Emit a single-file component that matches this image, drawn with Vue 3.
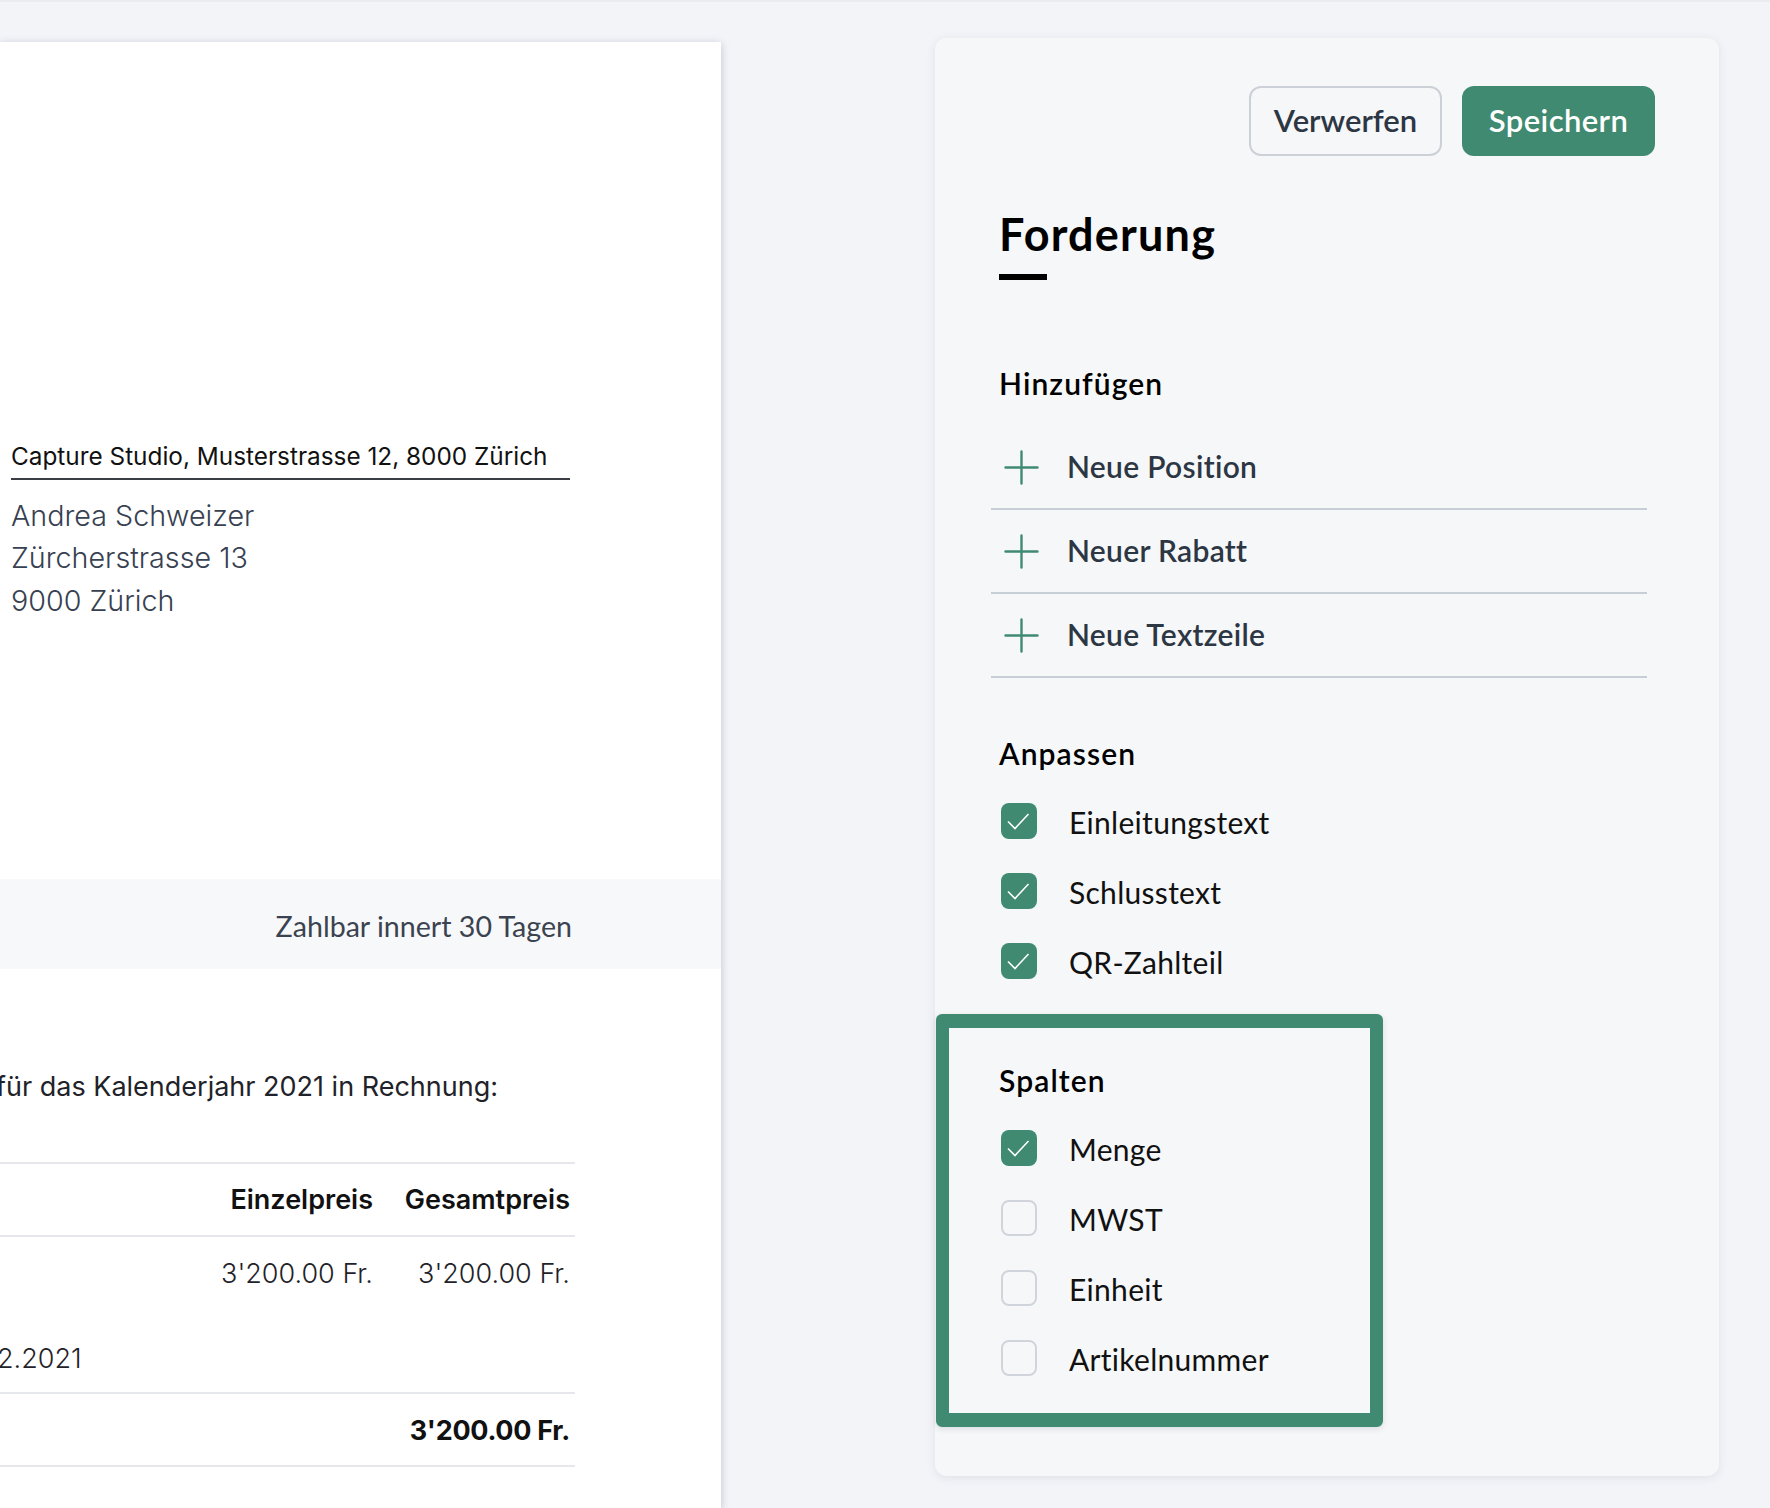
<script setup>
const addItems = ['Neue Position', 'Neuer Rabatt', 'Neue Textzeile']
const adjustItems = [
  { label: 'Einleitungstext', checked: true },
  { label: 'Schlusstext', checked: true },
  { label: 'QR-Zahlteil', checked: true },
]
const columnItems = [
  { label: 'Menge', checked: true },
  { label: 'MWST', checked: false },
  { label: 'Einheit', checked: false },
  { label: 'Artikelnummer', checked: false },
]
</script>

<template>
  <div class="page">
    <!-- Rechnung (links angeschnitten) -->
    <main class="doc">
      <div class="sender">Capture Studio, Musterstrasse 12, 8000 Zürich</div>
      <div class="address">
        <div>Andrea Schweizer</div>
        <div>Zürcherstrasse 13</div>
        <div>9000 Zürich</div>
      </div>
      <div class="terms">Zahlbar innert 30 Tagen</div>
      <p class="intro">für das Kalenderjahr 2021 in Rechnung:</p>
      <div class="table">
        <div class="row head">
          <span></span>
          <span class="num">Einzelpreis</span>
          <span class="num">Gesamtpreis</span>
        </div>
        <div class="row item">
          <span></span>
          <span class="num">3'200.00 Fr.</span>
          <span class="num">3'200.00 Fr.</span>
          <span class="period">2.2021</span>
        </div>
        <div class="row total">
          <span></span>
          <span></span>
          <span class="num">3'200.00 Fr.</span>
        </div>
      </div>
    </main>

    <!-- Seitenleiste -->
    <aside class="panel">
      <div class="actions">
        <button class="btn btn-ghost">Verwerfen</button>
        <button class="btn btn-primary">Speichern</button>
      </div>

      <h1 class="title">Forderung</h1>
      <div class="title-bar"></div>

      <h2 class="section-title add-title">Hinzufügen</h2>
      <ul class="add-list">
        <li v-for="item in addItems" :key="item" class="add-row">
          <svg class="plus" viewBox="0 0 35 35" fill="none" stroke="#3f8a70" stroke-width="2.4" stroke-linecap="round">
            <path d="M17.5 1.5v32M1.5 17.5h32" />
          </svg>
          <span class="add-label">{{ item }}</span>
        </li>
      </ul>

      <h2 class="section-title adjust-title">Anpassen</h2>
      <div class="checks">
        <label v-for="item in adjustItems" :key="item.label" class="check-row">
          <span class="box" :class="{ on: item.checked }">
            <svg v-if="item.checked" viewBox="0 0 36 36" fill="none" stroke="#fff" stroke-width="1.6">
              <path d="M7 18.5l7 7L27.5 11" />
            </svg>
          </span>
          <span class="check-label">{{ item.label }}</span>
        </label>
      </div>

      <section class="highlight">
        <h2 class="section-title">Spalten</h2>
        <div class="checks">
          <label v-for="item in columnItems" :key="item.label" class="check-row">
            <span class="box" :class="{ on: item.checked }">
              <svg v-if="item.checked" viewBox="0 0 36 36" fill="none" stroke="#fff" stroke-width="1.6">
                <path d="M7 18.5l7 7L27.5 11" />
              </svg>
            </span>
            <span class="check-label">{{ item.label }}</span>
          </label>
        </div>
      </section>
    </aside>
  </div>
</template>

<style scoped>
.page {
  display: flex;
  width: 1770px;
  height: 1508px;
  overflow: hidden;
  background: #f3f4f8;
  border-top: 2px solid #ebecf0;
  box-sizing: border-box;
  font-family: Lato, "Liberation Sans", sans-serif;
  font-variant-ligatures: none;
}

/* Rechnung */
.doc {
  width: 721px;
  height: 1466px;
  margin-top: 40px;
  padding-top: 400px;
  box-sizing: border-box;
  flex-shrink: 0;
  background: #fff;
  box-shadow: 0 2px 8px rgba(60, 70, 90, 0.28);
  font-family: Inter, "Liberation Sans", sans-serif;
  color: #111;
}

.sender {
  width: 559px;
  margin-left: 11px;
  height: 36px;
  line-height: 29px;
  font-size: 24.35px;
  border-bottom: 2px solid #3a3d42;
}

.address {
  margin: 15px 0 0 11px;
  font-size: 28.7px;
  font-weight: 300;
  line-height: 42.4px;
  color: #374151;
}

.terms {
  height: 87px;
  margin-top: 257px;
  padding: 3px 149px 0 0;
  display: flex;
  align-items: center;
  justify-content: flex-end;
  background: #f7f8fa;
  font-family: Lato, "Liberation Sans", sans-serif;
  font-size: 28.6px;
  color: #3b4350;
}

.intro {
  margin: 100px 0 0 -4px;
  font-size: 27px;
  line-height: 36px;
  white-space: nowrap;
  color: #1f2329;
}

.table {
  width: 575px;
  margin-top: 57px;
  border-top: 2px solid #e5e7eb;
  font-size: 27px;
}

.row {
  display: grid;
  grid-template-columns: 1fr 180px 197px;
  padding-right: 5px;
  border-bottom: 2px solid #e5e7eb;
}

.head {
  height: 71px;
  align-items: center;
  font-weight: 600;
}

.item {
  padding-top: 20px;
  height: 135px;
  grid-template-rows: 36px auto;
  row-gap: 49px;
  font-weight: 300;
  color: #1f2329;
}

.total {
  height: 70px;
  padding-top: 1px;
  align-items: center;
  font-weight: 700;
  letter-spacing: -0.3px;
}

.num {
  text-align: right;
  white-space: nowrap;
}

.period {
  grid-column: 1;
  grid-row: 2;
  margin-left: -3px;
}

/* Seitenleiste */
.panel {
  width: 784px;
  height: 1438px;
  margin: 36px 0 0 214px;
  padding: 48px 64px 0;
  box-sizing: border-box;
  flex-shrink: 0;
  background: #f6f7f9;
  border-radius: 12px;
  box-shadow: 0 2px 10px rgba(60, 70, 90, 0.1);
}

.actions {
  display: flex;
  justify-content: flex-end;
  gap: 20px;
}

.btn {
  width: 193px;
  height: 70px;
  padding: 0 0 2px;
  box-sizing: border-box;
  border-radius: 12px;
  font-family: inherit;
  font-size: 31px;
  font-weight: 600;
  letter-spacing: 0.4px;
  cursor: pointer;
}

.btn-ghost {
  background: transparent;
  border: 2px solid #ccd0d7;
  color: #2d3643;
  letter-spacing: 0;
}

.btn-primary {
  background: #3f8a70;
  border: 0;
  color: #fff;
}

.title {
  margin: 50px 0 0;
  font-size: 45px;
  line-height: 56px;
  font-weight: 700;
  letter-spacing: 1.2px;
  color: #000;
}

.title-bar {
  width: 48px;
  height: 6px;
  margin-top: 12px;
  background: #000;
}

.section-title {
  margin: 0;
  font-size: 30px;
  line-height: 36px;
  font-weight: 600;
  letter-spacing: 1.1px;
  color: #000;
}

.add-title {
  margin-top: 85px;
}

.add-list {
  list-style: none;
  width: 656px;
  margin: 25px 0 0 -8px;
  padding: 0;
}

.add-row {
  display: flex;
  align-items: center;
  gap: 28.5px;
  height: 82px;
  padding-left: 12.5px;
  border-bottom: 2px solid #c8ced6;
  font-size: 30px;
  font-weight: 600;
  letter-spacing: 0.3px;
  color: #2d3643;
}

.add-label {
  padding-bottom: 2px;
}

.plus {
  width: 35px;
  height: 35px;
  flex-shrink: 0;
}

.adjust-title {
  margin-top: 57px;
}

.checks {
  display: flex;
  flex-direction: column;
  gap: 34px;
  margin-top: 32px;
}

.check-row {
  display: flex;
  align-items: center;
  gap: 32px;
  margin-left: 2px;
  height: 36px;
}

.box {
  width: 36px;
  height: 36px;
  flex-shrink: 0;
  box-sizing: border-box;
  border: 2px solid #d0d5dc;
  border-radius: 8px;
}

.box.on {
  border: 0;
  background: #3f8a70;
}

.box svg {
  display: block;
  width: 36px;
  height: 36px;
}

.check-label {
  padding-top: 2px;
  font-size: 30px;
  letter-spacing: 0.3px;
  color: #111;
}

.highlight {
  width: 447px;
  height: 413px;
  margin: 35px 0 0 -63px;
  padding: 34px 0 0 50px;
  box-sizing: border-box;
  border: 14px solid #3f8a70;
  border-width: 14px 13px;
  border-radius: 6px;
  box-shadow: 0 2px 6px rgba(60, 70, 90, 0.15);
}
</style>
